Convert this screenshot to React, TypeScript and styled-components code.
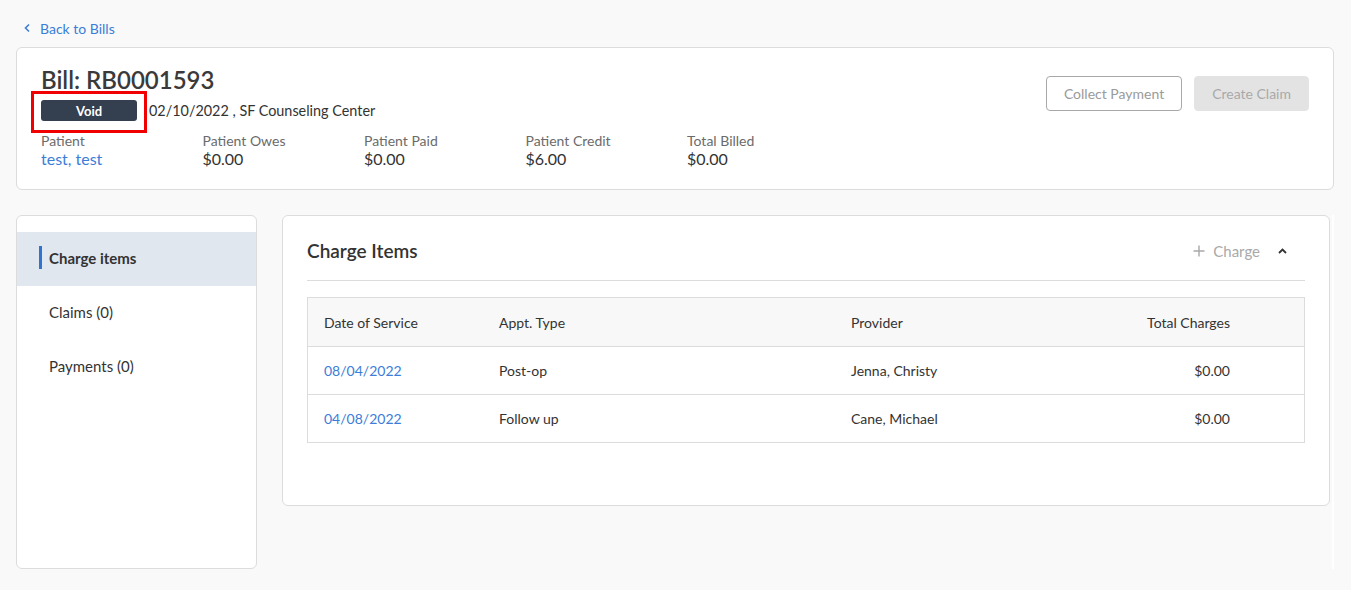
import React from 'react';
import styled, { createGlobalStyle } from 'styled-components';

const GlobalStyle = createGlobalStyle`
  html, body {
    margin: 0;
    padding: 0;
    background: #f9f9f9;
  }
  body {
    font-family: 'Lato', 'Open Sans', sans-serif;
    color: #333;
  }
  * {
    box-sizing: border-box;
  }
`;

const Page = styled.div`
  width: 1351px;
  height: 590px;
  padding: 17px 17px 0 16px;
  overflow: hidden;
`;

const BackLink = styled.a`
  display: inline-flex;
  align-items: center;
  gap: 9px;
  height: 18px;
  margin-left: 7px;
  font-size: 14px;
  color: #3b7dd8;
  text-decoration: none;
  cursor: pointer;
`;

const HeaderCard = styled.section`
  margin-top: 10px;
  height: 143px;
  background: #fff;
  border: 1px solid #dcdcdc;
  border-radius: 6px;
  padding: 17px 24px 0 24px;
  display: flex;
  justify-content: space-between;
  align-items: flex-start;
`;

const HeaderInfo = styled.div`
  display: flex;
  flex-direction: column;
`;

const Title = styled.h1`
  margin: 0;
  font-size: 24px;
  line-height: 30px;
  font-weight: 600;
  color: #3a3a3a;
`;

const StatusRow = styled.div`
  display: flex;
  align-items: center;
  gap: 12px;
  margin-top: 5px;
`;

const Highlight = styled.div`
  position: relative;
  display: flex;
`;

const HighlightRing = styled.span`
  position: absolute;
  left: -10px;
  top: -9px;
  width: 116px;
  height: 42px;
  border: 3px solid #f00000;
  pointer-events: none;
`;

const Badge = styled.span`
  display: inline-flex;
  align-items: center;
  justify-content: center;
  width: 96px;
  height: 21px;
  border-radius: 3px;
  background: #343f50;
  color: #fff;
  font-size: 13px;
  font-weight: 700;
`;

const Meta = styled.span`
  font-size: 14.4px;
  color: #333;
`;

const Stats = styled.div`
  display: grid;
  grid-template-columns: repeat(5, 161.5px);
  margin-top: 11px;
`;

const Stat = styled.div`
  display: flex;
  flex-direction: column;
`;

const StatLabel = styled.span`
  font-size: 14px;
  line-height: 17px;
  color: #6b6b6b;
`;

const StatValue = styled.span<{ $link?: boolean }>`
  font-size: 16px;
  line-height: 20px;
  color: ${p => (p.$link ? '#3b7dd8' : '#333')};
`;

const Actions = styled.div`
  display: flex;
  gap: 12px;
  margin-top: 11px;
`;

const Button = styled.button<{ $disabled?: boolean }>`
  height: 35px;
  padding: 0 17px;
  border-radius: 4px;
  font-family: inherit;
  font-size: 14px;
  border: 1px solid ${p => (p.$disabled ? '#e3e3e3' : '#a8a8a8')};
  background: ${p => (p.$disabled ? '#e3e3e3' : '#fff')};
  color: ${p => (p.$disabled ? '#a9a9a9' : '#9a9a9a')};
`;

const Body = styled.div`
  display: flex;
  gap: 25px;
  margin-top: 25px;
  height: 354px;
`;

const Sidebar = styled.nav`
  width: 241px;
  flex-shrink: 0;
  background: #fff;
  border: 1px solid #dcdcdc;
  border-radius: 6px;
  padding-top: 16px;
`;

const NavItem = styled.div<{ $active?: boolean }>`
  display: flex;
  align-items: center;
  gap: 7px;
  height: 54px;
  padding-left: 22px;
  padding-bottom: 3px;
  font-size: 15px;
  font-weight: ${p => (p.$active ? 700 : 400)};
  color: #333;
  background: ${p => (p.$active ? '#e1e7ef' : 'transparent')};

  &::before {
    content: '';
    width: 3px;
    height: 23px;
    background: ${p => (p.$active ? '#2f74d0' : 'transparent')};
  }
`;

const ContentColumn = styled.div`
  flex: 1;
  border-right: 2px solid #fff;
  padding-right: 2px;
`;

const Panel = styled.section`
  background: #fff;
  border: 1px solid #dcdcdc;
  border-radius: 6px;
  padding: 0 24px 62px 24px;
`;

const PanelHeader = styled.div`
  height: 65px;
  display: flex;
  align-items: center;
  justify-content: space-between;
  border-bottom: 1px solid #dcdcdc;
  padding-top: 5px;
`;

const PanelTitle = styled.h2`
  margin: 0;
  font-size: 19px;
  font-weight: 600;
  color: #333;
`;

const PanelTools = styled.div`
  display: flex;
  align-items: center;
  gap: 18px;
  padding-right: 18px;
`;

const AddCharge = styled.span`
  display: inline-flex;
  align-items: center;
  gap: 8px;
  font-size: 15px;
  color: #a9a9a9;
`;

const Table = styled.div`
  margin-top: 16px;
  border: 1px solid #dcdcdc;
`;

const Row = styled.div<{ $head?: boolean }>`
  display: grid;
  grid-template-columns: 175px 352px 1fr 200px;
  align-items: center;
  height: 48px;
  padding: 0 74px 0 16px;
  background: ${p => (p.$head ? '#f8f8f8' : '#fff')};
  font-size: 14px;
  color: #333;

  & + & {
    border-top: 1px solid #dcdcdc;
  }
`;

const Cell = styled.span<{ $right?: boolean; $link?: boolean }>`
  text-align: ${p => (p.$right ? 'right' : 'left')};
  color: ${p => (p.$link ? '#3b7dd8' : 'inherit')};
`;

const stats = [
  { label: 'Patient', value: 'test, test', link: true },
  { label: 'Patient Owes', value: '$0.00' },
  { label: 'Patient Paid', value: '$0.00' },
  { label: 'Patient Credit', value: '$6.00' },
  { label: 'Total Billed', value: '$0.00' },
];

const charges = [
  { date: '08/04/2022', type: 'Post-op', provider: 'Jenna, Christy', total: '$0.00' },
  { date: '04/08/2022', type: 'Follow up', provider: 'Cane, Michael', total: '$0.00' },
];

export default function App() {
  return (
    <>
      <GlobalStyle />
      <Page>
        <BackLink>
          <svg width="8" height="10" viewBox="0 0 8 10" fill="none">
            <path d="M6 1.5L2.5 5L6 8.5" stroke="#3b7dd8" strokeWidth="1.6" />
          </svg>
          Back to Bills
        </BackLink>

        <HeaderCard>
          <HeaderInfo>
            <Title>Bill: RB0001593</Title>
            <StatusRow>
              <Highlight>
                <HighlightRing />
                <Badge>Void</Badge>
              </Highlight>
              <Meta>02/10/2022 , SF Counseling Center</Meta>
            </StatusRow>
            <Stats>
              {stats.map(s => (
                <Stat key={s.label}>
                  <StatLabel>{s.label}</StatLabel>
                  <StatValue $link={s.link}>{s.value}</StatValue>
                </Stat>
              ))}
            </Stats>
          </HeaderInfo>
          <Actions>
            <Button>Collect Payment</Button>
            <Button $disabled>Create Claim</Button>
          </Actions>
        </HeaderCard>

        <Body>
          <Sidebar>
            <NavItem $active>Charge items</NavItem>
            <NavItem>Claims (0)</NavItem>
            <NavItem>Payments (0)</NavItem>
          </Sidebar>

          <ContentColumn>
            <Panel>
              <PanelHeader>
                <PanelTitle>Charge Items</PanelTitle>
                <PanelTools>
                  <AddCharge>
                    <svg width="12" height="12" viewBox="0 0 12 12">
                      <path d="M6 0.5V11.5M0.5 6H11.5" stroke="#a9a9a9" strokeWidth="1.4" />
                    </svg>
                    Charge
                  </AddCharge>
                  <svg width="9" height="6" viewBox="0 0 9 6" fill="none">
                    <path d="M1 5L4.5 1.5L8 5" stroke="#333" strokeWidth="1.8" />
                  </svg>
                </PanelTools>
              </PanelHeader>
              <Table>
                <Row $head>
                  <Cell>Date of Service</Cell>
                  <Cell>Appt. Type</Cell>
                  <Cell>Provider</Cell>
                  <Cell $right>Total Charges</Cell>
                </Row>
                {charges.map(c => (
                  <Row key={c.date}>
                    <Cell $link>{c.date}</Cell>
                    <Cell>{c.type}</Cell>
                    <Cell>{c.provider}</Cell>
                    <Cell $right>{c.total}</Cell>
                  </Row>
                ))}
              </Table>
            </Panel>
          </ContentColumn>
        </Body>
      </Page>
    </>
  );
}
